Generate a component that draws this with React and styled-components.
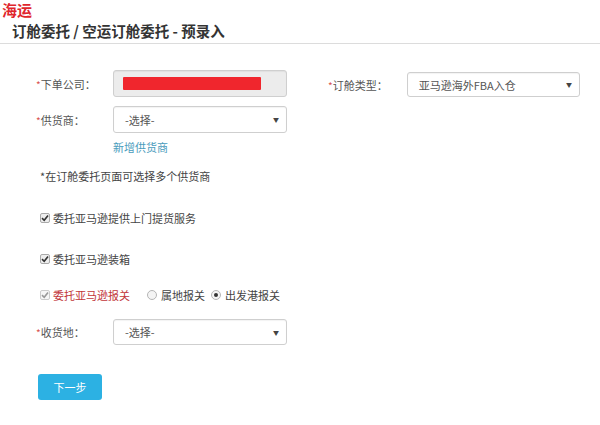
import styled, { createGlobalStyle } from "styled-components";

const GlobalStyle = createGlobalStyle`
  body {
    margin: 0;
    background: #ffffff;
    font-family: "Liberation Sans", "Noto Sans CJK SC", sans-serif;
    color: #555;
  }
`;

const App = () => {
  return (
    <Page>
      <GlobalStyle />
      <Brand>海运</Brand>
      <Breadcrumb>订舱委托 / 空运订舱委托 - 预录入</Breadcrumb>

      <Form>
        <TopRow>
          <LeftCol>
            <FieldRow>
              <Label>
                <Star>*</Star>下单公司：
              </Label>
              <Control disabled>
                <Redacted />
              </Control>
            </FieldRow>
            <FieldRow $gap={9}>
              <Label>
                <Star>*</Star>供货商：
              </Label>
              <Control>
                <SelectText>-选择-</SelectText>
                <Arrow>▼</Arrow>
              </Control>
            </FieldRow>
            <AddLink>新增供货商</AddLink>
          </LeftCol>

          <RightCol>
            <FieldRow $gap={2}>
              <Label $width={79}>
                <Star>*</Star>订舱类型：
              </Label>
              <Control $height={25}>
                <SelectText>亚马逊海外FBA入仓</SelectText>
                <Arrow>▼</Arrow>
              </Control>
            </FieldRow>
          </RightCol>
        </TopRow>

        <Note>*在订舱委托页面可选择多个供货商</Note>

        <CheckRow $gap={29}>
          <Box>
            <CheckMark />
          </Box>
          委托亚马逊提供上门提货服务
        </CheckRow>

        <CheckRow $gap={27}>
          <Box>
            <CheckMark />
          </Box>
          委托亚马逊装箱
        </CheckRow>

        <CheckRow $gap={22}>
          <Box $faded>
            <CheckMark faded />
          </Box>
          <Warn>委托亚马逊报关</Warn>
          <RadioGroup>
            <Radio />
            属地报关
            <Radio $on />
            出发港报关
          </RadioGroup>
        </CheckRow>

        <FieldRow $gap={17}>
          <Label>
            <Star>*</Star>收货地：
          </Label>
          <Control $height={26}>
            <SelectText>-选择-</SelectText>
            <Arrow>▼</Arrow>
          </Control>
        </FieldRow>

        <NextButton>下一步</NextButton>
      </Form>
    </Page>
  );
};

const CheckMark = ({ faded }) => (
  <svg width="8" height="8" viewBox="0 0 8 8">
    <path
      d="M1 4.2 L3.2 6.3 L7 1.4"
      fill="none"
      stroke={faded ? "#999" : "#333"}
      strokeWidth="1.6"
    />
  </svg>
);

export default App;

const Page = styled.div`
  width: 600px;
  height: 425px;
  overflow: hidden;
`;

const Brand = styled.div`
  height: 20px;
  line-height: 20px;
  padding-left: 2px;
  font-size: 15px;
  font-weight: 700;
  color: #e0262c;
  font-family: "Noto Sans CJK SC", sans-serif;
`;

const Breadcrumb = styled.div`
  height: 23px;
  line-height: 22px;
  padding-left: 12px;
  font-size: 14.5px;
  font-weight: 700;
  color: #333;
  border-bottom: 1px solid #dcdcdc;
  font-family: "Noto Sans CJK SC", sans-serif;
`;

const Form = styled.div`
  padding: 26px 0 0 36px;
  font-size: 11px;
  font-family: "Noto Sans CJK SC", sans-serif;
`;

const TopRow = styled.div`
  display: flex;
`;

const LeftCol = styled.div`
  width: 292px;
`;

const RightCol = styled.div`
  width: 252px;
`;

const FieldRow = styled.div`
  display: flex;
  align-items: center;
  margin-top: ${(p) => p.$gap || 0}px;
`;

const Label = styled.div`
  width: ${(p) => p.$width || 77}px;
  color: #555;
  white-space: nowrap;
`;

const Star = styled.span`
  color: #d9534f;
  font-size: 10px;
`;

const Control = styled.div`
  position: relative;
  box-sizing: border-box;
  width: 174px;
  height: ${(p) => p.$height || 27}px;
  display: flex;
  align-items: center;
  justify-content: space-between;
  padding: 0 7px 0 11px;
  border: 1px solid #cfcfcf;
  border-radius: 3px;
  background: ${(p) => (p.disabled ? "#ececec" : "#fff")};
  box-shadow: inset 0 1px 1px rgba(0, 0, 0, 0.05);
`;

const Redacted = styled.div`
  width: 138px;
  height: 13px;
  margin-left: -2px;
  background: #f0262d;
  border-radius: 1px;
`;

const SelectText = styled.span`
  color: #555;
`;

const Arrow = styled.span`
  font-size: 6px;
  color: #444;
`;

const AddLink = styled.div`
  margin: 8px 0 0 77px;
  line-height: 12px;
  color: #4a9cbc;
`;

const Note = styled.div`
  margin-top: 17px;
  padding-left: 4px;
  line-height: 12px;
  color: #444;
`;

const CheckRow = styled.div`
  display: flex;
  align-items: center;
  height: 14px;
  margin-top: ${(p) => p.$gap}px;
  padding-left: 4px;
  color: #444;
`;

const Box = styled.span`
  box-sizing: border-box;
  width: 10px;
  height: 10px;
  margin-right: 3px;
  display: inline-flex;
  align-items: center;
  justify-content: center;
  border: 1px solid ${(p) => (p.$faded ? "#ccc" : "#aaa")};
  border-radius: 2px;
  background: ${(p) => (p.$faded ? "#f6f6f6" : "#eee")};
`;

const Warn = styled.span`
  color: #c2363a;
  margin-right: 17px;
`;

const RadioGroup = styled.span`
  display: inline-flex;
  align-items: center;
  gap: 4px;
  color: #444;
`;

const Radio = styled.span`
  position: relative;
  box-sizing: border-box;
  width: 10px;
  height: 10px;
  margin-left: ${(p) => (p.$on ? 2 : 0)}px;
  border-radius: 50%;
  border: 1px solid #b5b5b5;
  background: #f4f4f4;

  &::after {
    content: "";
    display: ${(p) => (p.$on ? "block" : "none")};
    position: absolute;
    left: 2px;
    top: 2px;
    width: 4px;
    height: 4px;
    border-radius: 50%;
    background: #333;
  }
`;

const NextButton = styled.button`
  display: block;
  margin: 29px 0 0 2px;
  width: 64px;
  height: 26px;
  border: none;
  border-radius: 3px;
  background: #2cb1e3;
  color: #fff;
  font-size: 11px;
  font-family: "Noto Sans CJK SC", sans-serif;
`;
